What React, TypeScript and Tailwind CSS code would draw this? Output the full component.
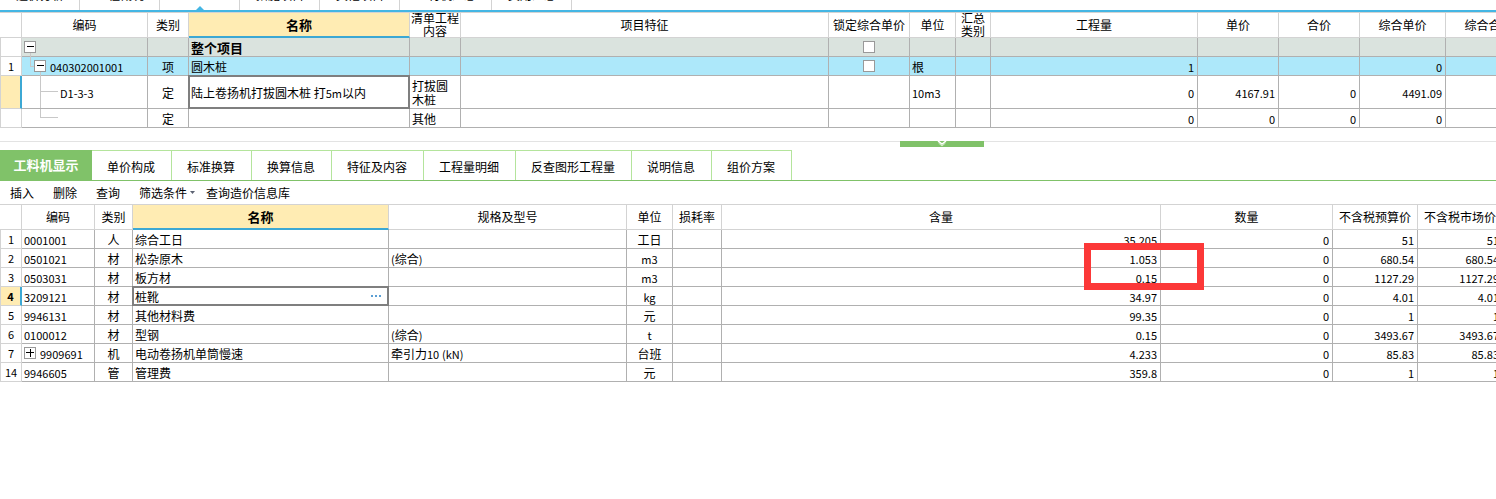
import { Fragment, type ReactNode } from "react";
import clsx from "clsx";

type Align = "left" | "center" | "right";

interface Column {
  title: string;
  width: string;
  align?: Align;
  active?: boolean;
}

interface Row {
  no: string;
  cells: ReactNode[];
  tone?: string;
  height?: string;
  selected?: boolean;
}

const ALIGN: Record<Align, string> = {
  left: "text-left px-[2px]",
  center: "text-center",
  right: "text-right pr-[3px]",
};

const MODULES = [
  "造价分析",
  "工程概况",
  "",
  "措施项目",
  "其他项目",
  "人材机汇总",
  "费用汇总",
];

const DETAIL_TABS = [
  "单价构成",
  "标准换算",
  "换算信息",
  "特征及内容",
  "工程量明细",
  "反查图形工程量",
  "说明信息",
  "组价方案",
];

const BILL_COLUMNS: Column[] = [
  { title: "编码", width: "w-[126px]" },
  { title: "类别", width: "w-[41px]", align: "center" },
  { title: "名称", width: "w-[221px]", active: true },
  { title: "清单工程内容", width: "w-[51px]" },
  { title: "项目特征", width: "w-[368px]" },
  { title: "锁定综合单价", width: "w-[81px]", align: "center" },
  { title: "单位", width: "w-[46px]" },
  { title: "汇总类别", width: "w-[35px]" },
  { title: "工程量", width: "w-[207px]", align: "right" },
  { title: "单价", width: "w-[81px]", align: "right" },
  { title: "合价", width: "w-[81px]", align: "right" },
  { title: "综合单价", width: "w-[86px]", align: "right" },
  { title: "综合合价", width: "w-[86px]", align: "right" },
];

const RESOURCE_COLUMNS: Column[] = [
  { title: "编码", width: "w-[73px]" },
  { title: "类别", width: "w-[38px]", align: "center" },
  { title: "名称", width: "w-[256px]", active: true },
  { title: "规格及型号", width: "w-[238px]" },
  { title: "单位", width: "w-[46px]", align: "center" },
  { title: "损耗率", width: "w-[49px]" },
  { title: "含量", width: "w-[439px]", align: "right" },
  { title: "数量", width: "w-[172px]", align: "right" },
  { title: "不含税预算价", width: "w-[85px]", align: "right" },
  { title: "不含税市场价", width: "w-[85px]", align: "right" },
];

// Latin runs are set one size smaller than the Chinese around them
function Mixed({ text }: { text: string }) {
  return (
    <div className="pt-[2px]">
      {text.split(/([\x21-\x7e]+)/).map((part, i) =>
        i % 2 ? (
          <span key={i} className="text-[11px]">
            {part}
          </span>
        ) : (
          <Fragment key={i}>{part}</Fragment>
        ),
      )}
    </div>
  );
}

function Toggle({ open }: { open: boolean }) {
  return (
    <button
      type="button"
      aria-label={open ? "折叠" : "展开"}
      className="relative h-3 w-3 shrink-0"
    >
      <svg width="12" height="12" viewBox="0 0 12 12" aria-hidden="true">
        <rect x="0.5" y="0.5" width="11" height="11" fill="#fff" stroke="#999" />
        <path
          d={open ? "M2.5 5.5H9.5" : "M2 5.5H10M6 1.5V9.5"}
          stroke="#000"
          fill="none"
          shapeRendering="crispEdges"
        />
      </svg>
    </button>
  );
}

function Branch({ className }: { className: string }) {
  return (
    <span
      aria-hidden="true"
      className={clsx("absolute border-[#c8c8c8]", className)}
    />
  );
}

function LockBox({ name }: { name: string }) {
  return (
    <input
      type="checkbox"
      aria-label={`锁定综合单价 ${name}`}
      className="mx-auto block h-3 w-3 appearance-none border border-[#999] bg-white checked:bg-[#3ca8d4]"
    />
  );
}

function Grid({
  label,
  columns,
  rows,
  width,
}: {
  label: string;
  columns: Column[];
  rows: Row[];
  width: string;
}) {
  return (
    <table
      aria-label={label}
      className={clsx("table-fixed border-separate border-spacing-0", width)}
    >
      <colgroup>
        <col className="w-[22px]" />
        {columns.map((c) => (
          <col key={c.title} className={c.width} />
        ))}
      </colgroup>
      <thead>
        <tr className="h-[25px]">
          <td className="border-r border-b border-[#d3d3d3]" />
          {columns.map((c) => (
            <th
              key={c.title}
              scope="col"
              className={clsx(
                "border-r border-r-[#d3d3d3] p-0",
                c.active
                  ? "border-b-2 border-b-[#3ca8d4] bg-[#ffecb3] text-[13px] font-bold"
                  : "border-b border-b-[#d3d3d3] font-normal",
              )}
            >
              <div
                className={clsx(
                  "flex items-center justify-center leading-[13px]",
                  c.active ? "h-[23px]" : "h-6 pb-[2px]",
                )}
              >
                {c.title}
              </div>
            </th>
          ))}
        </tr>
      </thead>
      <tbody>
        {rows.map((row) => (
          <tr key={row.no} className={row.height ?? "h-[19px]"}>
            <th
              scope="row"
              className={clsx(
                "border-b border-l border-[#d3d3d3] p-0 text-[11px]",
                row.selected
                  ? "border-r-2 border-r-[#3ca8d4] bg-[#ffecb3] font-bold"
                  : "border-r font-normal",
              )}
            >
              {row.no.trim()}
            </th>
            {columns.map((c, i) => (
              <td
                key={c.title}
                className={clsx(
                  "relative border-r border-b border-[#b0b0b0] py-0 leading-[14px]",
                  ALIGN[c.align ?? "left"],
                  row.tone,
                )}
              >
                {typeof row.cells[i] === "string" ? (
                  <Mixed text={row.cells[i] as string} />
                ) : (
                  row.cells[i]
                )}
                {row.selected && c.active && (
                  <span
                    aria-hidden="true"
                    className="pointer-events-none absolute -inset-px border-2 border-[#7f7f7f]"
                  />
                )}
              </td>
            ))}
          </tr>
        ))}
      </tbody>
    </table>
  );
}

const BILL_ROWS: Row[] = [
  {
    no: "",
    tone: "bg-[#dae3de]",
    cells: [
      <div className="flex items-center">
        <Toggle open />
        <Branch className="top-[15px] left-2 h-1 border-l" />
      </div>,
      "",
      <b className="block pt-[2px] text-[13px]">整个项目</b>,
      "",
      "",
      <LockBox name="整个项目" />,
    ],
  },
  {
    no: "1",
    tone: "bg-[#ade8fa]",
    cells: [
      <div className="flex items-center gap-1 pl-[10px] text-[11px]">
        <Branch className="top-0 left-2 h-[10px] w-1 border-b border-l" />
        <Toggle open />
        <span className="pt-[2px]">040302001001</span>
        <Branch className="top-[15px] left-[18px] h-1 border-l" />
      </div>,
      "项",
      "圆木桩",
      "",
      "",
      <LockBox name="圆木桩" />,
      "根",
      "",
      "1",
      "",
      "",
      "0",
    ],
  },
  {
    no: " ",
    height: "h-[33px]",
    selected: true,
    cells: [
      <div className="pt-[2px] pl-9 text-[11px]">
        <Branch className="top-0 left-[18px] h-full border-l" />
        <Branch className="top-[15px] left-[18px] w-[18px] border-t" />
        D1-3-3
      </div>,
      "定",
      "陆上卷扬机打拔圆木桩 打5m以内",
      "打拔圆木桩",
      "",
      "",
      "10m3",
      "",
      "0",
      "4167.91",
      "0",
      "4491.09",
    ],
  },
  {
    no: "  ",
    cells: [
      <Branch className="top-0 left-[18px] h-[9px] w-[18px] border-b border-l" />,
      "定",
      "",
      "其他",
      "",
      "",
      "",
      "",
      "0",
      "0",
      "0",
      "0",
    ],
  },
];

const RESOURCE_ROWS: Row[] = [
  { no: "1", cells: ["0001001", "人", "综合工日", "", "工日", "", "35.205", "0", "51", "51"] },
  { no: "2", cells: ["0501021", "材", "松杂原木", "(综合)", "m3", "", "1.053", "0", "680.54", "680.54"] },
  { no: "3", cells: ["0503031", "材", "板方材", "", "m3", "", "0.15", "0", "1127.29", "1127.29"] },
  {
    no: "4",
    selected: true,
    cells: [
      "3209121",
      "材",
      <div className="flex items-center justify-between pr-1">
        <span className="pt-[2px]">桩靴</span>
        <button type="button" aria-label="选择材料" className="h-3">
          <svg width="12" height="12" viewBox="0 0 12 12" aria-hidden="true">
            <path d="M1 5h2v2H1zM5 5h2v2H5zM9 5h2v2H9z" fill="#5b9fd4" />
          </svg>
        </button>
      </div>,
      "",
      "kg",
      "",
      "34.97",
      "0",
      "4.01",
      "4.01",
    ],
  },
  { no: "5", cells: ["9946131", "材", "其他材料费", "", "元", "", "99.35", "0", "1", "1"] },
  { no: "6", cells: ["0100012", "材", "型钢", "(综合)", "t", "", "0.15", "0", "3493.67", "3493.67"] },
  {
    no: "7",
    cells: [
      <div className="flex items-center gap-1 text-[11px]">
        <Toggle open={false} />
        <span className="pt-[2px]">9909691</span>
      </div>,
      "机",
      "电动卷扬机单筒慢速",
      "牵引力10 (kN)",
      "台班",
      "",
      "4.233",
      "0",
      "85.83",
      "85.83",
    ],
  },
  { no: "14", cells: ["9946605", "管", "管理费", "", "元", "", "359.8", "0", "1", "1"] },
];

function ModuleBar() {
  return (
    <nav className="flex h-3 items-end overflow-hidden border-b-2 border-[#44b6e4]">
      {MODULES.map((name) => (
        <button
          key={name}
          type="button"
          aria-label={name || "分部分项"}
          className="relative h-6 shrink-0 border-r border-[#d3d3d3] pr-[15px] pb-[7px] pl-4 leading-4"
        >
          {name || (
            <span className="flex w-12 justify-center">
              <svg
                width="8"
                height="4"
                viewBox="0 0 8 4"
                className="absolute bottom-0"
                aria-hidden="true"
              >
                <path d="M4 0L8 4H0z" fill="#44b6e4" />
              </svg>
            </span>
          )}
        </button>
      ))}
    </nav>
  );
}

function Splitter() {
  return (
    <div className="mt-[13px] flex h-[9px] items-start border-t border-[#e3e3e3] pl-[900px]">
      <button
        type="button"
        aria-label="收起"
        className="-mt-px flex h-[6px] w-[84px] justify-center bg-[#80c269]"
      >
        <svg width="10" height="6" viewBox="0 0 10 6" aria-hidden="true">
          <path d="M1 0L5 3L9 0" fill="none" stroke="#fff" strokeWidth="1.5" />
          <path d="M1.5 2L5 5L8.5 2" fill="none" stroke="#d5edc9" />
        </svg>
      </button>
    </div>
  );
}

function DetailTabs() {
  return (
    <div role="tablist" className="flex h-[31px] border-b border-[#80c269]">
      <button
        type="button"
        role="tab"
        aria-selected="true"
        className="w-[92px] bg-[#80c269] text-[13px] font-bold text-white"
      >
        工料机显示
      </button>
      {DETAIL_TABS.map((name) => (
        <button
          key={name}
          type="button"
          role="tab"
          aria-selected="false"
          className="border-t border-r border-[#b4e49c] pt-[2px] pr-4 pl-[15px]"
        >
          {name}
        </button>
      ))}
    </div>
  );
}

function Toolbar() {
  return (
    <div className="flex h-6 items-center border-b border-[#d3d3d3] pl-[10px]">
      <div className="flex gap-[19px]">
        <button type="button">插入</button>
        <button type="button">删除</button>
        <button type="button">查询</button>
        <button type="button" className="flex items-center gap-[3px]">
          筛选条件
          <svg width="5" height="3" viewBox="0 0 5 3" aria-hidden="true">
            <path d="M0 0H5L2.5 3z" fill="#5c6272" />
          </svg>
        </button>
      </div>
      <button type="button" className="ml-[11px]">
        查询造价信息库
      </button>
    </div>
  );
}

export default function App() {
  return (
    <main className="min-h-screen overflow-hidden bg-white font-['Noto_Sans_CJK_SC',sans-serif] text-[12px] leading-4 text-black">
      <ModuleBar />
      <section className="overflow-hidden border-t border-[#d3d3d3]">
        <Grid
          label="分部分项清单"
          columns={BILL_COLUMNS}
          rows={BILL_ROWS}
          width="w-[1532px]"
        />
      </section>
      <Splitter />
      <DetailTabs />
      <Toolbar />
      <section className="relative overflow-hidden">
        <Grid
          label="工料机显示"
          columns={RESOURCE_COLUMNS}
          rows={RESOURCE_ROWS}
          width="w-[1503px]"
        />
        <div
          aria-hidden="true"
          className="pointer-events-none absolute top-[38px] left-[1084px] h-[47px] w-[120px] border-[7px] border-[#fc3838]"
        />
      </section>
    </main>
  );
}
